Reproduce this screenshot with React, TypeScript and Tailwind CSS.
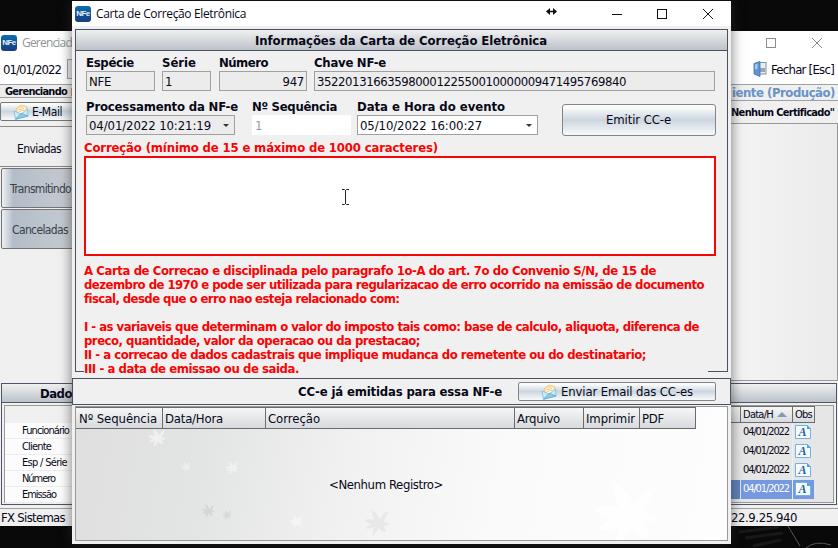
import { useLayoutEffect, useRef, useState } from "react";
import type { ReactNode } from "react";

/** Single line of text whose tracking is tuned so it spans `w` pixels. */
function T({ w, className = "", children }: { w: number; className?: string; children: string }) {
  const ref = useRef<HTMLSpanElement>(null);
  const [spacing, setSpacing] = useState(0);
  useLayoutEffect(() => {
    const natural = ref.current!.getBoundingClientRect().width;
    setSpacing((w - natural) / children.length);
  }, [w, children]);
  return (
    <span ref={ref} style={{ letterSpacing: spacing }} className={`inline-block shrink-0 whitespace-pre ${className}`}>
      {children}
    </span>
  );
}

function NfeIcon({ className = "" }: { className?: string }) {
  return (
    <div className={`flex h-4 w-4 shrink-0 items-center justify-center overflow-hidden rounded-[3px] bg-linear-to-b from-[#0b6fb0] via-[#144f92] to-[#17407f] pt-px font-['Liberation_Sans',sans-serif] text-[8px] leading-none font-bold text-[#e6f2fb] ${className}`}>
      <T w={13.500}>NFe</T>
    </div>
  );
}

function MailIcon() {
  return (
    <svg viewBox="0 0 16 16" className="h-4 w-4 shrink-0">
      <path d="M3 5 L7 1.500 L9 1 L14 3 L14 8 L4 9Z" fill="#f8dfa6" stroke="#e0bd72" strokeWidth=".6" />
      <path d="M4.500 5 L12 3 L13 8 L5.500 9.500Z" fill="#fffbe9" />
      <path d="M5.500 6 L11 4.500 M6 7.500 L11.500 6" stroke="#e7b95a" strokeWidth=".7" />
      <path d="M1 7 L8 10 L14.500 5 L15 12 L2.500 15.300Z" fill="#cdeaf8" stroke="#7dbcd8" strokeWidth=".8" />
      <path d="M2.500 15.300 L7 10.200 L9 9.600 L15 12Z" fill="#8fcbe6" stroke="#4f9fc6" strokeWidth=".6" />
    </svg>
  );
}

function ExitIcon() {
  return (
    <svg viewBox="0 0 14 16" className="h-4 w-3.5 shrink-0">
      <rect x="5" y="1.500" width="8" height="11.500" fill="#e9edf0" stroke="#7f93a8" />
      <rect x="7" y="7" width="5" height="4" fill="#9aa6ae" />
      <path d="M1 2.500 L7 0.500 L7 15.500 L1 13Z" fill="#5f93d4" stroke="#4370ad" strokeWidth=".8" />
      <path d="M2 3.500 L4.500 2.800 L4.500 8 L2 8.500Z" fill="#a9cbf0" />
    </svg>
  );
}

function ObsIcon() {
  return (
    <svg viewBox="0 0 16 14" className="h-3.5 w-4 shrink-0">
      <path d="M.5.500 H12 L15.500 4 V13.500 H.5Z" fill="#f5fafe" stroke="#6db2ea" />
      <path d="M12 0 L16 4 H12Z" fill="#4ba3ee" />
      <text x="7.500" y="11" textAnchor="middle" fontSize="12" fontWeight="bold" fontStyle="italic" fontFamily="Liberation Serif, serif" fill="#235f9c">A</text>
    </svg>
  );
}

function Leaf({ className, fill }: { className: string; fill: string }) {
  return (
    <svg viewBox="0 0 20 20" className={`absolute ${className}`}>
      <path d="M0 8 Q5 6 8 8 Q6 4 6 0 Q11 3 12 7 Q15 2 19 1 Q17 5 15 9 Q17 9 20 11 Q17 12 15 12 Q16 14 17 17 Q13 16 11 14 Q9 17 7 20 Q6 16 8 13 Q4 15 1 14 Q3 12 6 11 Q2 10 0 8Z" fill={fill} />
    </svg>
  );
}

const barFill = "bg-linear-to-b from-[#eff0f0] via-[#d6d9dc] to-[#bcc2c9]";
const headFill = "bg-linear-to-b from-[#f5f6f6] to-[#d7dade]";
const buttonFill = "bg-linear-to-b from-[#f9fafa] from-10% via-[#ccd5df] via-50% to-[#f4f7fa] to-95%";

function Field({ label, lw, width, children, combo, plain, className = "" }: {
  label: string; lw: number; width: string; children: ReactNode; combo?: boolean; plain?: boolean; className?: string;
}) {
  return (
    <div className={`flex flex-col ${width}`}>
      <T w={lw} className="mt-px -mb-px h-4 self-start leading-4 font-bold">{label}</T>
      <div className={`mt-px flex h-5 items-center px-[2px] ${plain ? "border-transparent" : "border-[#a0a0a0]"} border ${className}`}>
        {children}
        {combo && <span className="mr-[3px] ml-auto border-x-[3px] border-t-[3px] border-x-transparent border-t-[#333]" />}
      </div>
    </div>
  );
}

function BackLeft() {
  const rows: [string, number][] = [["Funcionário", 47], ["Cliente", 29], ["Esp / Série", 45], ["Número", 33], ["Emissão", 34]];
  return (
    <div className="flex w-[72px] flex-col overflow-hidden">
      <div className="flex h-[14px] shrink-0 items-center border-y border-[#a0a0a0] bg-[#ededed] pt-px pl-[5px] text-[11px] leading-3 font-bold">
        <T w={62}>Gerenciando</T>
        <span className="ml-1 h-2 w-px bg-[#ef8a3c]" />
      </div>
      <div className="h-[29px] shrink-0 border-b border-[#8c8c8c] pt-1">
        <div className={`flex h-[19px] w-24 items-center rounded-[2px] border border-[#777] pl-3 ${buttonFill}`}>
          <MailIcon />
          <T w={30} className="ml-[3px] text-[12px]">E-Mail</T>
        </div>
      </div>
      <div className="flex h-10 shrink-0 items-center border-b border-[#858585] bg-[#efefef] pt-1 pl-[17px] text-[12px]"><T w={44}>Enviadas</T></div>
      <div className="flex shrink-0 flex-col gap-px pt-px pl-px text-[12px] text-[#39424c]">
        <div className="flex h-10 w-24 items-center rounded-[2px] border border-[#737373] bg-linear-to-r from-[#eef1f4] via-[#b3bdc8] via-12% to-[#ced1d4] pt-px pl-2"><T w={61}>Transmitindo</T></div>
        <div className="flex h-10 w-24 items-center rounded-[2px] border border-[#737373] bg-linear-to-r from-[#eef1f4] via-[#b3bdc8] via-12% to-[#ced1d4] pt-px pl-[10px]"><T w={56}>Canceladas</T></div>
      </div>
      <div className="mt-auto ml-px flex h-[122px] w-24 shrink-0 flex-col border border-[#4d5666]">
        <div className={`flex h-[19px] shrink-0 items-center border-b border-[#4d5666] pl-[38px] font-bold ${barFill}`}><T w={32}>Dado</T></div>
        <div className="m-[2px] flex h-[98px] flex-col border border-[#999] pt-[17px] text-[11px]">
          {rows.map(([name, w]) => (
            <div key={name} className="flex h-4 shrink-0 items-center border-b border-[#ececec] bg-[#fcfcfc] pl-[17px]"><T w={w}>{name}</T></div>
          ))}
        </div>
      </div>
    </div>
  );
}

function BackRight() {
  return (
    <div className="flex w-[107px] flex-col overflow-hidden">
      <div className="flex h-[17px] shrink-0 items-center border-y border-[#a0a0a0] pl-px text-[13px] font-bold text-[#6793c8]"><T w={103}>iente (Produção)</T></div>
      <div className="flex h-[22px] shrink-0 items-center text-[11px] font-bold"><T w={103}>{'Nenhum Certificado"'}</T></div>
      <div className="h-[258px] w-[106.500px] shrink-0 border-y border-r border-[#999] bg-linear-to-r from-[#f4f4f4] to-[#ebebeb]" />
      <div className="mt-auto flex h-[122px] w-[106px] shrink-0 flex-col border-y border-r border-[#4d5666]">
        <div className={`h-[19px] shrink-0 border-b border-[#4d5666] ${barFill}`} />
        <div className="mt-[2px] mr-[2px] h-[98px] border-y border-r border-[#999] bg-[#e6e6e6] text-[11px]">
          <div className={`flex h-[17px] w-[84px] border-y border-r border-[#6c6c6c] ${headFill}`}>
            <div className="w-[10px] border-r border-[#6c6c6c]" />
            <div className="flex w-[52px] items-center border-r border-[#6c6c6c] pl-[2px]">
              <T w={30}>Data/H</T>
              <span className="ml-1 border-x-[5px] border-b-[5px] border-x-transparent border-b-[#8c96b4]" />
            </div>
            <div className="flex items-center pl-[2px]"><T w={17}>Obs</T></div>
          </div>
          {[0, 1, 2, 3].map((i) => (
            <div key={i} className={`flex h-[19px] w-[83px] items-center ${i === 3 ? "bg-[#7598df] text-white" : ""}`}>
              <div className={`h-[19px] w-[10px] border-r border-[#e6e6e6] ${i === 3 ? "bg-[#5d83bd]" : ""}`} />
              <div className="flex h-[19px] w-[52px] items-center border-r border-[#efefef] pb-[2px] pl-[2px]"><T w={46}>04/01/2022</T></div>
              <div className="flex pb-[2px] pl-[2px]"><ObsIcon /></div>
            </div>
          ))}
        </div>
      </div>
    </div>
  );
}

function ManagerWindow() {
  return (
    <div className="absolute top-[31px] left-0 flex h-[495px] w-[838px] flex-col bg-[#f0f0f0]">
      <div className="flex h-[23px] shrink-0 items-center bg-white pl-px font-['Open_Sans',sans-serif] text-[12px] text-[#8f9696]">
        <NfeIcon />
        <T w={50} className="ml-[5px]">Gerenciad</T>
        <svg viewBox="0 0 60 12" className="mr-[13px] ml-auto h-3 w-[60px]" fill="none" stroke="#8c8c8c">
          <rect x="1.500" y="1.500" width="9" height="9" />
          <path d="M47 1 L57 11 M57 1 L47 11" />
        </svg>
      </div>
      <div className="flex h-[30px] shrink-0 items-center bg-white pr-1 pl-[3px]">
        <T w={58}>01/01/2022</T>
        <div className="ml-1.5 h-5 w-20 border border-[#a0a0a0] bg-[#eee]" />
        <div className="ml-auto flex items-center gap-1"><ExitIcon /><T w={63}>Fechar [Esc]</T></div>
      </div>
      <div className="flex h-[421px] shrink-0 justify-between">
        <BackLeft />
        <BackRight />
      </div>
      <div className="mt-[3px] flex flex-1 items-center justify-between border-t border-[#a0a0a0] pl-px">
        <T w={64}>FX Sistemas</T>
        <T w={66} className="mr-[41px]">22.9.25.940</T>
      </div>
    </div>
  );
}

const notice: [string, number][] = [
  ["A Carta de Correcao e disciplinada pelo paragrafo 1o-A do art. 7o do Convenio S/N, de 15 de", 572],
  ["dezembro de 1970 e pode ser utilizada para regularizacao de erro ocorrido na emissão de documento", 620],
  ["fiscal, desde que o erro nao esteja relacionado com:", 315],
  ["", 0],
  ["I - as variaveis que determinam o valor do imposto tais como: base de calculo, aliquota, diferenca de", 615],
  ["preco, quantidade, valor da operacao ou da prestacao;", 336],
  ["II - a correcao de dados cadastrais que implique mudanca do remetente ou do destinatario;", 562],
  ["III - a data de emissao ou de saida.", 215],
];

function CorrectionDialog() {
  return (
    <div className="absolute top-px left-[72px] flex h-[543px] w-[659px] flex-col bg-[#f0f0f0] shadow-[0_0_11px_1px_rgba(40,40,40,0.55)]">
      <div className="flex h-[25px] shrink-0 items-center bg-white pl-[3px] font-['Open_Sans',sans-serif] text-[12px]">
        <NfeIcon />
        <T w={150} className="ml-[5px]">Carta de Correção Eletrônica</T>
        <svg viewBox="0 0 176 16" className="mr-[14px] ml-auto h-4 w-44" fill="none" stroke="#111" strokeWidth="1">
          <path d="M6 5.500 H15" strokeWidth="1.500" />
          <path d="M9 2 V9 L5 5.500Z M12 2 V9 L16 5.500Z" fill="#111" stroke="none" />
          <path d="M71 8.500 H81" />
          <rect x="116.500" y="3.500" width="9" height="9" />
          <path d="M162 3 L172 13 M172 3 L162 13" />
        </svg>
      </div>

      <div className="mx-[3px] mt-[3px] flex h-[343px] shrink-0 flex-col border border-[#4a5162]">
        <div className={`flex h-[21px] shrink-0 items-center justify-center border-b border-[#4a5162] pr-px font-bold ${barFill}`}>
          <T w={292}>Informações da Carta de Correção Eletrônica</T>
        </div>
        <div className="mt-[3px] flex pl-[10px]">
          <Field label="Espécie" lw={48} width="w-[69px]" className="bg-[#ececec]"><T w={22}>NFE</T></Field>
          <div className="w-[7px]" />
          <Field label="Série" lw={34} width="w-[49px]" className="bg-[#ececec]"><T w={7}>1</T></Field>
          <div className="w-2" />
          <Field label="Número" lw={49} width="w-[88px]" className="justify-end bg-[#ececec]"><T w={21.500}>947</T></Field>
          <div className="w-[7px]" />
          <Field label="Chave NF-e" lw={72} width="w-[401px]" className="bg-[#ececec]"><T w={309}>35220131663598000122550010000009471495769840</T></Field>
        </div>
        <div className="mt-[7px] flex h-[37px] pl-[10px]">
          <Field label="Processamento da NF-e" lw={152} width="w-[149px]" combo className="bg-[#ececec]"><T w={122}>04/01/2022 10:21:19</T></Field>
          <div className="w-[17px]" />
          <Field label="Nº Sequência" lw={85} width="w-[99px]" plain className="bg-white text-[#999]"><T w={7}>1</T></Field>
          <div className="w-[6px]" />
          <Field label="Data e Hora do evento" lw={148} width="w-[181px]" combo className="bg-white"><T w={122}>05/10/2022 16:00:27</T></Field>
          <div className={`mt-[6px] ml-6 flex h-8 w-[154px] shrink-0 items-center justify-center rounded-[3px] border border-[#858585] pr-px pb-px ${buttonFill}`}>
            <T w={65}>Emitir CC-e</T>
          </div>
        </div>
        <div className="mt-1 flex h-4 shrink-0 items-center pt-px pl-2 font-bold text-[#f80404]">
          <T w={354}>Correção (mínimo de 15 e máximo de 1000 caracteres)</T>
        </div>
        <div className="mt-px ml-2 flex h-[100px] w-[632px] shrink-0 items-start border-2 border-[#f80404] bg-white">
          <svg viewBox="0 0 9 18" className="mt-[30px] ml-[255px] h-[18px] w-[9px]" fill="none" stroke="#222">
            <path d="M1 1.500 H3.500 L4.500 2.500 L5.500 1.500 H8 M4.500 2 V16 M1 16.500 H3.500 L4.500 15.500 L5.500 16.500 H8" />
          </svg>
        </div>
        <div className="mt-[7px] ml-2 flex h-[113px] w-[624px] shrink-0 flex-col items-start bg-[#f0f0f0] font-bold text-[#f80404]">
          {notice.map(([line, w], i) => (
            <div key={i} className="h-[14px] leading-[15px]">{line && <T w={w}>{line}</T>}</div>
          ))}
        </div>
      </div>

      <div className="mt-[6px] flex h-[27px] shrink-0 items-center border border-[#4a5162] pl-[225px] font-bold">
        <T w={204} className="-mt-px">CC-e já emitidas para essa NF-e</T>
        <div className={`ml-[16px] flex h-[19px] w-[198px] items-center rounded-[2px] border border-[#858585] pl-[22px] font-normal ${buttonFill}`}>
          <MailIcon />
          <T w={132} className="ml-1">Enviar Email das CC-es</T>
        </div>
      </div>

      <div className="relative mx-[3px] mt-px flex h-[135px] shrink-0 flex-col overflow-hidden border border-[#999] bg-linear-[100deg,#dfdfdf,#e3e4e4_20%,#f1f1f1_42%,#fafafa_65%,#fdfdfd]">
        <Leaf className="top-[22px] left-[70px] h-[18px] w-[22px]" fill="#f0f0f0" />
        <Leaf className="top-[55px] left-[105px] h-2.5 w-2.5" fill="#eeeeee" />
        <Leaf className="top-[54px] left-[148px] h-3.5 w-4" fill="#f1f1f1" />
        <Leaf className="top-[97px] left-[118px] h-3.5 w-7" fill="#d3d7d5" />
        <Leaf className="top-[103px] left-[146px] h-2.5 w-2.5" fill="#d6d9d7" />
        <Leaf className="top-[108px] left-[210px] h-3.5 w-5" fill="#f5f5f5" />
        <Leaf className="top-[103px] left-[288px] h-[26px] w-[26px]" fill="#e8e8e8" />
        <Leaf className="top-[76px] left-[507px] h-[66px] w-[88px]" fill="#fefefe" />
        <div className="relative flex h-[22px] w-[620px] shrink-0 border-y border-[#6c6c6c]">
          {([["Nº Sequência", 78, "w-[87px] pl-[3px]"], ["Data/Hora", 58, "w-[103px] pl-[2px]"], ["Correção", 52, "w-[249px] pl-[2px]"], ["Arquivo", 43, "w-[69px] pl-[2px]"], ["Imprimir", 49, "w-14 pl-[2px]"], ["PDF", 22, "w-14 pl-[2px]"]] as [string, number, string][]).map(([name, w, cls]) => (
            <div key={name} className={`flex shrink-0 items-center border-r border-[#6c6c6c] ${headFill} ${cls}`}><T w={w}>{name}</T></div>
          ))}
        </div>
        <div className="relative flex h-[111px] items-center justify-center pr-[31px]"><T w={114}>{"<Nenhum Registro>"}</T></div>
      </div>
    </div>
  );
}

export default function App() {
  return (
    <div className="relative h-[548px] w-[838px] overflow-hidden bg-[#090909] font-['DejaVu_Sans_Condensed','DejaVu_Sans',sans-serif] text-[13px] leading-none text-[#080818]">
      <svg viewBox="0 0 107 22" className="absolute right-0 bottom-0 h-[22px] w-[107px]" fill="none" stroke="#555">
        <path d="M57 0 L69 20 M75 22 Q84 14 100 19" />
        <path d="M8 6 L48 1 M14 12 L52 7 M22 20 L50 14" stroke="#181818" strokeWidth="3" />
      </svg>
      <ManagerWindow />
      <CorrectionDialog />
    </div>
  );
}
